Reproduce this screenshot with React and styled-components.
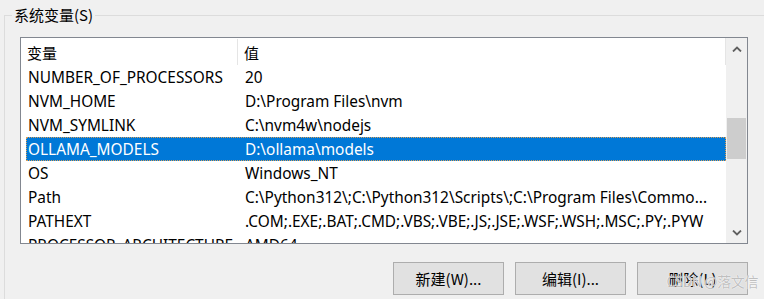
import styled, { createGlobalStyle } from "styled-components";

const GlobalStyle = createGlobalStyle`
  html, body {
    margin: 0;
    padding: 0;
    background: #f0f0f0;
    overflow: hidden;
  }
  body {
    font-family: "Noto Sans", "Noto Sans CJK SC", sans-serif;
    font-size: 15.4px;
    color: #000;
  }
`;

const variables = [
  { name: "NUMBER_OF_PROCESSORS", value: "20" },
  { name: "NVM_HOME", value: "D:\\Program Files\\nvm" },
  { name: "NVM_SYMLINK", value: "C:\\nvm4w\\nodejs" },
  { name: "OLLAMA_MODELS", value: "D:\\ollama\\models", selected: true },
  { name: "OS", value: "Windows_NT" },
  {
    name: "Path",
    value: "C:\\Python312\\;C:\\Python312\\Scripts\\;C:\\Program Files\\Commo...",
  },
  {
    name: "PATHEXT",
    value: ".COM;.EXE;.BAT;.CMD;.VBS;.VBE;.JS;.JSE;.WSF;.WSH;.MSC;.PY;.PYW",
  },
  { name: "PROCESSOR_ARCHITECTURE", value: "AMD64" },
];

const Page = styled.div`
  position: relative;
  width: 764px;
  height: 299px;
  padding: 5px 0 0 4px;
  box-sizing: border-box;
`;

const Group = styled.fieldset`
  margin: 0;
  padding: 0;
  min-width: 0;
  height: 300px;
  border: none;
  border-top: 1px solid #dcdcdc;
  border-left: 1px solid #dcdcdc;
`;

const Legend = styled.legend`
  margin-left: 7px;
  padding: 0 2px;
  line-height: 20px;
  font-size: 15px;
  font-family: "Noto Sans CJK SC", sans-serif;
`;

const ListBox = styled.div`
  display: flex;
  width: 728px;
  height: 207px;
  margin: 12px 0 0 15px;
  border: 1px solid #828790;
  box-sizing: border-box;
  background: #fff;
  overflow: hidden;
`;

const Table = styled.div`
  flex: 1;
  display: flex;
  flex-direction: column;
  min-width: 0;
`;

const Header = styled.div`
  display: flex;
  height: 27px;
  flex-shrink: 0;
  border-right: 1px solid #e5e5e5;
  box-sizing: border-box;
`;

const HeaderCell = styled.div`
  width: ${(p) => p.$width || "auto"};
  flex: ${(p) => (p.$width ? "none" : 1)};
  display: flex;
  align-items: center;
  padding-left: 6px;
  margin-top: 1px;
  border-right: ${(p) => (p.$first ? "1px solid #e5e5e5" : "none")};
  box-sizing: border-box;
  font-family: "Noto Sans CJK SC", sans-serif;
  font-size: 15px;
`;

const Row = styled.div`
  display: flex;
  height: 24px;
  flex-shrink: 0;
  align-items: center;
  margin-left: 5px;
  padding-top: 1px;
  box-sizing: border-box;
  background: ${(p) => (p.$selected ? "#0078d7" : "transparent")};
  color: ${(p) => (p.$selected ? "#fff" : "#000")};
  outline: ${(p) => (p.$selected ? "1px dotted #d9a05a" : "none")};
  outline-offset: -1px;
`;

const Cell = styled.div`
  width: ${(p) => p.$width || "auto"};
  flex: ${(p) => (p.$width ? "none" : 1)};
  padding-left: ${(p) => p.$pad};
  white-space: nowrap;
  overflow: hidden;
  box-sizing: border-box;
`;

const Scrollbar = styled.div`
  width: 21px;
  flex-shrink: 0;
  display: flex;
  flex-direction: column;
  background: #f0f0f0;
`;

const Arrow = styled.div`
  height: 21px;
  flex-shrink: 0;
  display: flex;
  align-items: center;
  justify-content: center;
`;

const Track = styled.div`
  flex: 1;
  display: flex;
  flex-direction: column;
`;

const Thumb = styled.div`
  height: 41px;
  margin: ${(p) => p.$top}px 1px 0 1px;
  background: #cdcdcd;
`;

const Buttons = styled.div`
  display: flex;
  justify-content: flex-end;
  gap: 11px;
  width: 728px;
  margin: 18px 0 0 15px;
`;

const Button = styled.button`
  width: 111px;
  height: 33px;
  padding: 0;
  background: #e1e1e1;
  border: 1px solid #adadad;
  font-family: "Noto Sans CJK SC", sans-serif;
  font-size: 15px;
  color: #000;
`;

const Watermark = styled.div`
  position: absolute;
  right: 6px;
  bottom: 8px;
  font-family: "Noto Sans CJK SC", sans-serif;
  font-size: 14px;
  letter-spacing: -0.4px;
  color: rgba(170, 170, 170, 0.75);
  text-shadow: 0 0 1px #fff, 0 0 1px #fff;
  pointer-events: none;
`;

const Chevron = ({ up }) => (
  <svg width="10" height="6" viewBox="0 0 10 6">
    <path
      d={up ? "M1 5.5 L5 1.5 L9 5.5" : "M1 0.5 L5 4.5 L9 0.5"}
      fill="none"
      stroke="#606060"
      strokeWidth="1.8"
    />
  </svg>
);

export default function App() {
  return (
    <>
      <GlobalStyle />
      <Page>
        <Group>
          <Legend>系统变量(S)</Legend>
          <ListBox>
            <Table>
              <Header>
                <HeaderCell $width="217px" $first>
                  变量
                </HeaderCell>
                <HeaderCell>值</HeaderCell>
              </Header>
              {variables.map((v) => (
                <Row key={v.name} $selected={v.selected}>
                  <Cell $width="212px" $pad="2px">
                    {v.name}
                  </Cell>
                  <Cell $pad="7px">{v.value}</Cell>
                </Row>
              ))}
            </Table>
            <Scrollbar>
              <Arrow>
                <Chevron up />
              </Arrow>
              <Track>
                <Thumb $top={59} />
              </Track>
              <Arrow>
                <Chevron />
              </Arrow>
            </Scrollbar>
          </ListBox>
          <Buttons>
            <Button>新建(W)...</Button>
            <Button>编辑(I)...</Button>
            <Button>删除(L)</Button>
          </Buttons>
        </Group>
        <Watermark>CSDN @落文信</Watermark>
      </Page>
    </>
  );
}
